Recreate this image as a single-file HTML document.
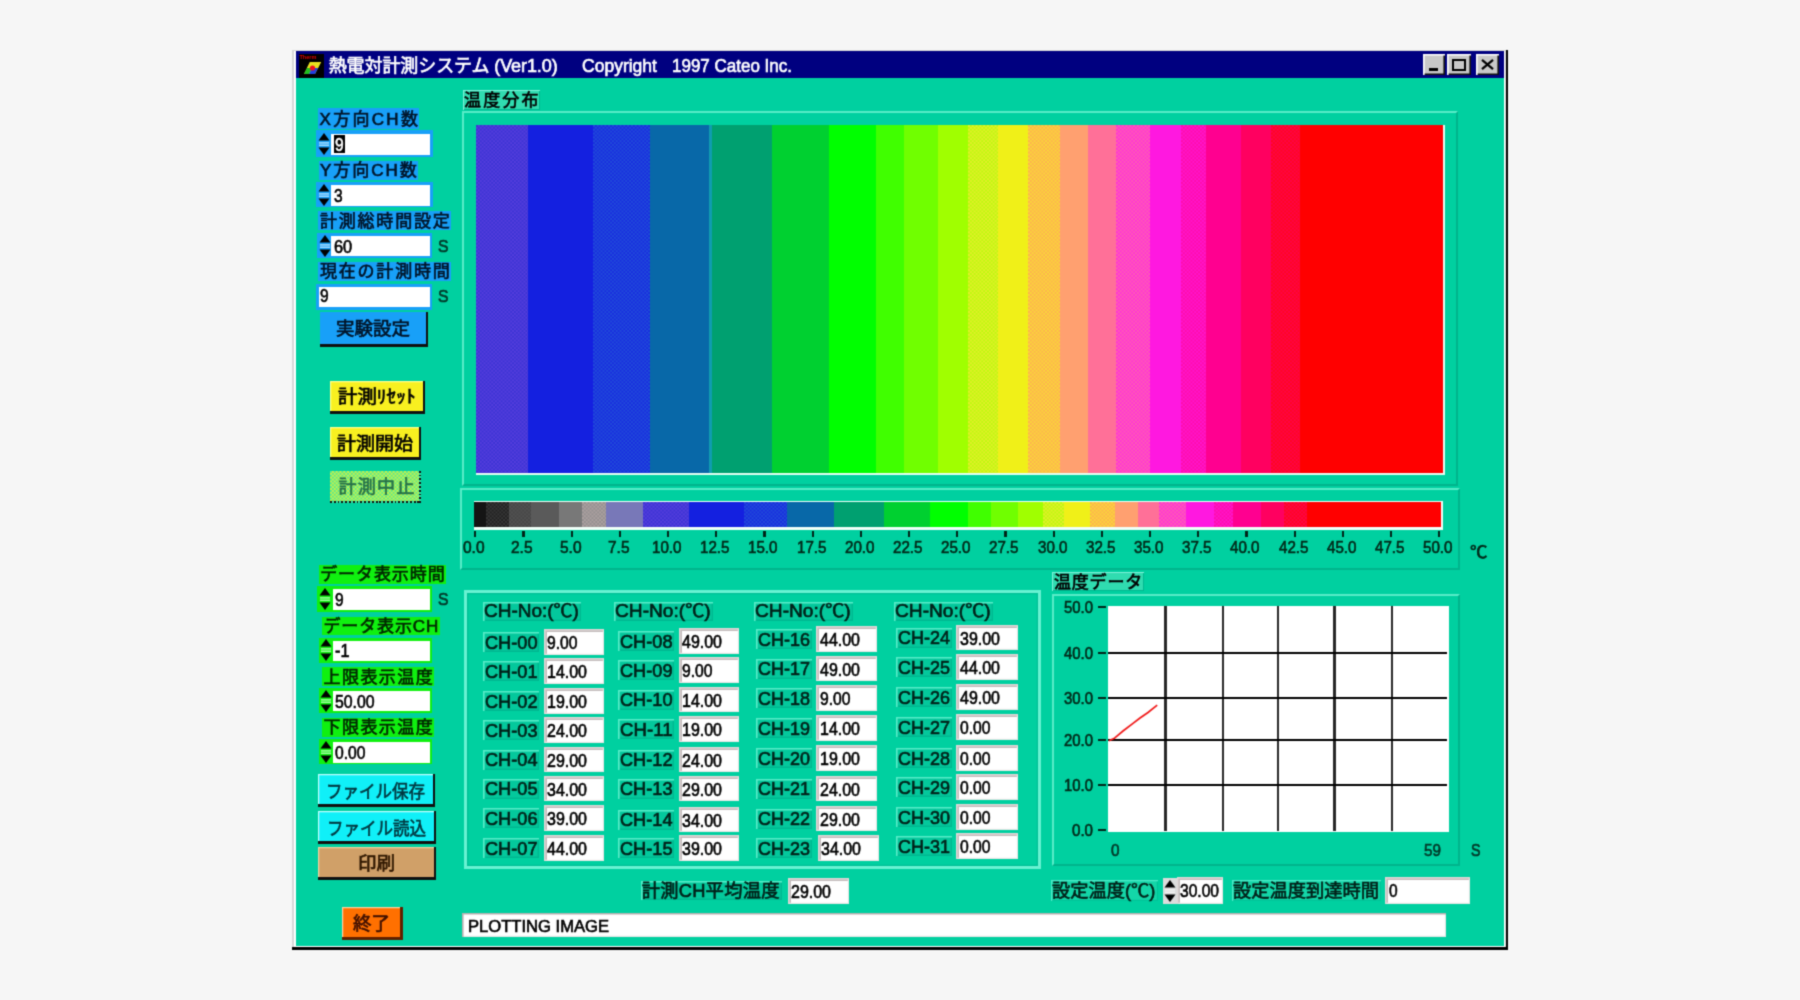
<!DOCTYPE html>
<html lang="ja"><head><meta charset="utf-8"><title>熱電対計測システム</title>
<style>
html,body{margin:0;padding:0;background:#f6f6f6;}
body{width:1800px;height:1000px;overflow:hidden;position:relative;font-family:"Liberation Sans","Noto Sans CJK JP",sans-serif;}
#w{position:absolute;left:0;top:0;width:1800px;height:1000px;background:#f6f6f6;filter:url(#bl);}
.t{position:absolute;white-space:nowrap;line-height:1.2;transform-origin:0 50%;display:inline-block;-webkit-text-stroke:0.65px currentColor;}
svg{position:absolute;overflow:visible}
</style></head>
<body><svg width="0" height="0" style="position:absolute"><defs><filter id="bl" x="0" y="0" width="100%" height="100%" color-interpolation-filters="sRGB"><feConvolveMatrix order="3" kernelMatrix="1 4 1 4 16 4 1 4 1" divisor="36" edgeMode="duplicate" preserveAlpha="true"/></filter></defs></svg><div id="w">
<div style="position:absolute;left:292.0px;top:946.7px;width:1216.0px;height:2.9px;background:#000;"></div>
<div style="position:absolute;left:1505.6px;top:50.0px;width:2.4px;height:899.6px;background:#000;"></div>
<div style="position:absolute;left:292.3px;top:50.3px;width:1213.7px;height:896.9px;background:#d8d8d8;"></div>
<div style="position:absolute;left:293.7px;top:50.8px;width:1210.9px;height:895.8px;background:#ffffff;"></div>
<div style="position:absolute;left:296.3px;top:51.3px;width:1207.6px;height:26.9px;background:#000080;"></div>
<div style="position:absolute;left:296.3px;top:78.2px;width:1207.6px;height:868.2px;background:#00d0a0;"></div>
<div style="position:absolute;left:299.0px;top:54.0px;width:25.0px;height:23.5px;background:#000;"></div>
<svg style="left:299px;top:54px" width="25" height="24" viewBox="0 0 25 24"><polygon points="5,20 11,8 22,8 16,20" fill="#e8e020"/><polygon points="5,20 8,14 13,14 10,20" fill="#20c020"/><polygon points="10,20 13,14 19,14 16,20" fill="#2040e0"/><polygon points="11,8 22,8 19,14 8,14" fill="#e8e020"/><circle cx="13.5" cy="14" r="2.6" fill="#f01020"/><text x="0.5" y="4.6" font-size="5.5" fill="#e00000" font-family="Liberation Sans,sans-serif" font-weight="700">Therm</text></svg>
<span class="t" style="letter-spacing:-0.09px;left:328.7px;top:55.7px;font-size:18.0px;color:#fff;font-weight:400;">熱電対計測システム (Ver1.0)</span>
<span class="t" style="transform:scaleX(0.973);left:581.7px;top:55.7px;font-size:18.0px;color:#fff;font-weight:400;">Copyright</span>
<span class="t" style="transform:scaleX(0.944);left:671.7px;top:55.7px;font-size:18.0px;color:#fff;font-weight:400;">1997 Cateo Inc.</span>
<div style="position:absolute;left:1423.1px;top:54.4px;width:21.8px;height:20.3px;background:#c8c8c8;box-shadow:inset 1.6px 1.6px 0 #fff,inset -1.6px -1.6px 0 #101010;"></div>
<div style="position:absolute;left:1446.9px;top:54.4px;width:23.8px;height:20.3px;background:#c8c8c8;box-shadow:inset 1.6px 1.6px 0 #fff,inset -1.6px -1.6px 0 #101010;"></div>
<div style="position:absolute;left:1476.0px;top:54.4px;width:22.7px;height:20.3px;background:#c8c8c8;box-shadow:inset 1.6px 1.6px 0 #fff,inset -1.6px -1.6px 0 #101010;"></div>
<div style="position:absolute;left:1429.4px;top:68.4px;width:8.8px;height:2.8px;background:#000;"></div>
<div style="position:absolute;left:1451.8px;top:58.6px;width:14.0px;height:12.6px;background:transparent;box-sizing:border-box;border:2px solid #000;"></div>
<svg style="left:1481px;top:59px" width="13" height="11" viewBox="0 0 13 11"><path d="M1 0.8 L12 10.2 M12 0.8 L1 10.2" stroke="#000" stroke-width="2.2" fill="none"/></svg>
<div style="position:absolute;left:318.0px;top:108.4px;width:101.4px;height:20.4px;background:#18a0f8;"></div>
<span class="t" style="letter-spacing:2.30px;left:319.5px;top:109.7px;font-size:17.0px;color:#001428;font-weight:400;">X方向CH数</span>
<div style="position:absolute;left:316.2px;top:130.0px;width:116.4px;height:27.0px;background:#18a0f8;"></div>
<div style="position:absolute;left:331.4px;top:133.6px;width:98.2px;height:21.6px;background:#fff;"></div>
<svg style="left:318.3px;top:131.5px" width="12" height="24" viewBox="0 0 12 24"><polygon points="6,1 11.5,8.5 0.5,8.5" fill="#000"/><polygon points="6,23 11.5,15.5 0.5,15.5" fill="#000"/><rect x="1" y="10.3" width="10" height="1.2" fill="#fff" opacity="0.75"/><rect x="1" y="12.6" width="10" height="1.2" fill="#fff" opacity="0.75"/></svg>
<div style="position:absolute;left:333.6px;top:135.4px;width:11.4px;height:17.4px;background:#000;"></div>
<span class="t" style="transform:scaleX(0.859);left:334.6px;top:135.1px;font-size:18.0px;color:#fff;font-weight:400;">9</span>
<div style="position:absolute;left:318.6px;top:160.6px;width:99.6px;height:19.2px;background:#18a0f8;"></div>
<span class="t" style="letter-spacing:1.94px;left:320.1px;top:161.3px;font-size:17.0px;color:#001428;font-weight:400;">Y方向CH数</span>
<div style="position:absolute;left:316.2px;top:181.6px;width:116.4px;height:25.8px;background:#18a0f8;"></div>
<div style="position:absolute;left:331.4px;top:184.6px;width:98.2px;height:21.0px;background:#fff;"></div>
<svg style="left:318.3px;top:182.5px" width="12" height="24" viewBox="0 0 12 24"><polygon points="6,1 11.5,8.5 0.5,8.5" fill="#000"/><polygon points="6,23 11.5,15.5 0.5,15.5" fill="#000"/><rect x="1" y="10.3" width="10" height="1.2" fill="#fff" opacity="0.75"/><rect x="1" y="12.6" width="10" height="1.2" fill="#fff" opacity="0.75"/></svg>
<span class="t" style="transform:scaleX(0.859);left:333.8px;top:185.8px;font-size:18.0px;color:#000;font-weight:400;">3</span>
<div style="position:absolute;left:318.4px;top:211.2px;width:132.9px;height:18.6px;background:#18a0f8;"></div>
<span class="t" style="letter-spacing:1.82px;left:319.9px;top:211.6px;font-size:17.0px;color:#001428;font-weight:400;">計測総時間設定</span>
<div style="position:absolute;left:316.8px;top:232.8px;width:115.2px;height:25.6px;background:#18a0f8;"></div>
<div style="position:absolute;left:331.2px;top:236.0px;width:98.5px;height:20.0px;background:#fff;"></div>
<svg style="left:318.5px;top:233.6px" width="12" height="24" viewBox="0 0 12 24"><polygon points="6,1 11.5,8.5 0.5,8.5" fill="#000"/><polygon points="6,23 11.5,15.5 0.5,15.5" fill="#000"/><rect x="1" y="10.3" width="10" height="1.2" fill="#fff" opacity="0.75"/><rect x="1" y="12.6" width="10" height="1.2" fill="#fff" opacity="0.75"/></svg>
<span class="t" style="transform:scaleX(0.909);left:333.6px;top:236.7px;font-size:18.0px;color:#000;font-weight:400;">60</span>
<span class="t" style="transform:scaleX(0.926);left:437.7px;top:237.1px;font-size:17.0px;color:#003828;font-weight:400;">S</span>
<div style="position:absolute;left:318.4px;top:261.6px;width:132.9px;height:19.2px;background:#18a0f8;"></div>
<span class="t" style="letter-spacing:1.82px;left:319.9px;top:262.3px;font-size:17.0px;color:#001428;font-weight:400;">現在の計測時間</span>
<div style="position:absolute;left:316.0px;top:284.0px;width:116.0px;height:25.6px;background:#18a0f8;"></div>
<div style="position:absolute;left:318.9px;top:287.2px;width:110.8px;height:20.0px;background:#fff;"></div>
<span class="t" style="transform:scaleX(0.859);left:319.5px;top:286.3px;font-size:18.0px;color:#000;font-weight:400;">9</span>
<span class="t" style="transform:scaleX(0.926);left:437.7px;top:287.4px;font-size:17.0px;color:#003828;font-weight:400;">S</span>
<div style="position:absolute;left:320.0px;top:312.0px;width:108.0px;height:34.5px;background:#101010;"></div>
<div style="position:absolute;left:320.0px;top:312.0px;width:105.8px;height:31.9px;background:#18a0f8;"></div>
<span class="t" style="transform:scaleX(1.028);left:335.9px;top:319.4px;font-size:18.0px;color:#001428;font-weight:400;">実験設定</span>
<div style="position:absolute;left:330.4px;top:380.5px;width:94.5px;height:33.1px;background:#101010;"></div>
<div style="position:absolute;left:330.4px;top:380.5px;width:92.3px;height:30.5px;background:#f8f020;box-shadow:inset 1.2px 1.2px 0 #ffff90;"></div>
<span class="t" style="transform:scaleX(1.078);left:337.7px;top:387.2px;font-size:18.0px;color:#000;font-weight:400;">計測ﾘｾｯﾄ</span>
<div style="position:absolute;left:330.4px;top:427.2px;width:90.5px;height:32.8px;background:#101010;"></div>
<div style="position:absolute;left:330.4px;top:427.2px;width:88.3px;height:30.2px;background:#f8f020;box-shadow:inset 1.2px 1.2px 0 #ffff90;"></div>
<span class="t" style="transform:scaleX(1.056);left:336.5px;top:433.8px;font-size:18.0px;color:#000;font-weight:400;">計測開始</span>
<div style="position:absolute;left:330.4px;top:470.5px;width:90.5px;height:32.8px;background:#88f068;background-image:repeating-conic-gradient(#c8f048 0 25%,#58e890 0 50%);background-size:3.8px 3.8px;"></div>
<div style="position:absolute;left:330.4px;top:500.9px;width:90.5px;height:2.4px;background:#207858;background-image:repeating-linear-gradient(90deg,#101010 0 1.9px,#30e0a0 1.9px 3.8px);"></div>
<div style="position:absolute;left:418.8px;top:470.5px;width:2.1px;height:32.8px;background:#207858;background-image:repeating-linear-gradient(0deg,#101010 0 1.9px,#30e0a0 1.9px 3.8px);"></div>
<span class="t" style="letter-spacing:1.33px;left:338.4px;top:476.5px;font-size:18.0px;color:#1c6444;font-weight:400;opacity:0.9;">計測中止</span>
<div style="position:absolute;left:318.7px;top:564.9px;width:127.5px;height:18.9px;background:#10f010;"></div>
<span class="t" style="letter-spacing:0.92px;left:320.2px;top:565.4px;font-size:17.0px;color:#002800;font-weight:400;">データ表示時間</span>
<div style="position:absolute;left:316.5px;top:585.8px;width:115.5px;height:26.4px;background:#10f010;"></div>
<div style="position:absolute;left:333.0px;top:589.0px;width:96.8px;height:21.0px;background:#fff;"></div>
<svg style="left:319.2px;top:587.0px" width="12" height="24" viewBox="0 0 12 24"><polygon points="6,1 11.5,8.5 0.5,8.5" fill="#000"/><polygon points="6,23 11.5,15.5 0.5,15.5" fill="#000"/><rect x="1" y="10.3" width="10" height="1.2" fill="#fff" opacity="0.75"/><rect x="1" y="12.6" width="10" height="1.2" fill="#fff" opacity="0.75"/></svg>
<span class="t" style="transform:scaleX(0.859);left:335.4px;top:590.2px;font-size:18.0px;color:#000;font-weight:400;">9</span>
<span class="t" style="transform:scaleX(0.926);left:437.7px;top:590.3px;font-size:17.0px;color:#003828;font-weight:400;">S</span>
<div style="position:absolute;left:322.0px;top:616.6px;width:117.7px;height:18.9px;background:#10f010;"></div>
<span class="t" style="letter-spacing:0.86px;left:323.5px;top:617.1px;font-size:17.0px;color:#002800;font-weight:400;">データ表示CH</span>
<div style="position:absolute;left:318.7px;top:637.5px;width:113.3px;height:25.3px;background:#10f010;"></div>
<div style="position:absolute;left:333.0px;top:640.8px;width:96.8px;height:19.8px;background:#fff;"></div>
<svg style="left:320.4px;top:638.1px" width="12" height="24" viewBox="0 0 12 24"><polygon points="6,1 11.5,8.5 0.5,8.5" fill="#000"/><polygon points="6,23 11.5,15.5 0.5,15.5" fill="#000"/><rect x="1" y="10.3" width="10" height="1.2" fill="#fff" opacity="0.75"/><rect x="1" y="12.6" width="10" height="1.2" fill="#fff" opacity="0.75"/></svg>
<span class="t" style="transform:scaleX(0.905);left:335.4px;top:641.4px;font-size:18.0px;color:#000;font-weight:400;">-1</span>
<div style="position:absolute;left:322.0px;top:667.2px;width:112.2px;height:18.4px;background:#10f010;"></div>
<span class="t" style="letter-spacing:1.44px;left:323.5px;top:667.5px;font-size:17.0px;color:#002800;font-weight:400;">上限表示温度</span>
<div style="position:absolute;left:318.7px;top:688.0px;width:113.3px;height:25.4px;background:#10f010;"></div>
<div style="position:absolute;left:333.0px;top:691.4px;width:96.8px;height:19.8px;background:#fff;"></div>
<svg style="left:320.4px;top:688.7px" width="12" height="24" viewBox="0 0 12 24"><polygon points="6,1 11.5,8.5 0.5,8.5" fill="#000"/><polygon points="6,23 11.5,15.5 0.5,15.5" fill="#000"/><rect x="1" y="10.3" width="10" height="1.2" fill="#fff" opacity="0.75"/><rect x="1" y="12.6" width="10" height="1.2" fill="#fff" opacity="0.75"/></svg>
<span class="t" style="transform:scaleX(0.879);left:335.4px;top:692.0px;font-size:18.0px;color:#000;font-weight:400;">50.00</span>
<div style="position:absolute;left:322.0px;top:717.8px;width:112.2px;height:19.0px;background:#10f010;"></div>
<span class="t" style="letter-spacing:1.44px;left:323.5px;top:718.4px;font-size:17.0px;color:#002800;font-weight:400;">下限表示温度</span>
<div style="position:absolute;left:318.7px;top:739.3px;width:113.3px;height:24.7px;background:#10f010;"></div>
<div style="position:absolute;left:333.0px;top:742.0px;width:96.8px;height:20.8px;background:#fff;"></div>
<svg style="left:320.4px;top:739.6px" width="12" height="24" viewBox="0 0 12 24"><polygon points="6,1 11.5,8.5 0.5,8.5" fill="#000"/><polygon points="6,23 11.5,15.5 0.5,15.5" fill="#000"/><rect x="1" y="10.3" width="10" height="1.2" fill="#fff" opacity="0.75"/><rect x="1" y="12.6" width="10" height="1.2" fill="#fff" opacity="0.75"/></svg>
<span class="t" style="transform:scaleX(0.870);left:335.4px;top:743.1px;font-size:18.0px;color:#000;font-weight:400;">0.00</span>
<div style="position:absolute;left:318.0px;top:773.5px;width:116.9px;height:33.3px;background:#101010;"></div>
<div style="position:absolute;left:318.0px;top:773.5px;width:114.7px;height:30.7px;background:#10f0f8;box-shadow:inset 1.2px 1.2px 0 #c0ffff;"></div>
<span class="t" style="transform:scaleX(0.917);left:325.8px;top:782.1px;font-size:18.0px;color:#003840;font-weight:400;">ファイル保存</span>
<div style="position:absolute;left:318.0px;top:810.6px;width:118.4px;height:33.2px;background:#101010;"></div>
<div style="position:absolute;left:318.0px;top:810.6px;width:116.2px;height:30.6px;background:#10f0f8;box-shadow:inset 1.2px 1.2px 0 #c0ffff;"></div>
<span class="t" style="transform:scaleX(0.917);left:326.6px;top:819.2px;font-size:18.0px;color:#003840;font-weight:400;">ファイル読込</span>
<div style="position:absolute;left:318.0px;top:847.0px;width:118.4px;height:33.0px;background:#101010;"></div>
<div style="position:absolute;left:318.0px;top:847.0px;width:116.2px;height:30.4px;background:#d0a068;box-shadow:inset 1.2px 1.2px 0 #f0d0a0;"></div>
<span class="t" style="transform:scaleX(1.028);left:357.6px;top:853.7px;font-size:18.0px;color:#301800;font-weight:400;">印刷</span>
<div style="position:absolute;left:342.2px;top:907.4px;width:60.4px;height:32.3px;background:#602000;"></div>
<div style="position:absolute;left:342.2px;top:907.4px;width:58.2px;height:29.7px;background:#ff7000;box-shadow:inset 1.2px 1.2px 0 #ffd0a0;"></div>
<span class="t" style="transform:scaleX(1.028);left:352.8px;top:913.8px;font-size:18.0px;color:#401000;font-weight:400;">終了</span>
<div style="position:absolute;left:462.5px;top:90.0px;width:77.5px;height:20.0px;background:#30dcb0;box-shadow:inset 1px 1px 0 #80f0d8,inset -1px -1px 0 #00b890;"></div>
<span class="t" style="letter-spacing:2.17px;left:464.0px;top:91.1px;font-size:17.0px;color:#000;font-weight:400;">温度分布</span>
<div style="position:absolute;left:462.0px;top:110.8px;width:995.6px;height:375.4px;background:transparent;box-sizing:border-box;border-style:solid;border-color:#58ecc8 #00b48c #00b48c #58ecc8;border-width:2.8px 2.6px 2.6px 2.8px;"></div>
<div style="position:absolute;left:475.6px;top:124.6px;width:969.5px;height:350.8px;background:#e4fff2;"></div>
<div style="position:absolute;left:475.8px;top:124.9px;width:52.0px;height:348.6px;background:#4a3ad8;background-image:repeating-conic-gradient(#543cdc 0 25%,#3c34d4 0 50%);background-size:3.8px 3.8px;"></div>
<div style="position:absolute;left:527.5px;top:124.9px;width:65.6px;height:348.6px;background:#1420e0;"></div>
<div style="position:absolute;left:592.8px;top:124.9px;width:57.2px;height:348.6px;background:#1c3adc;background-image:repeating-conic-gradient(#182ede 0 25%,#204ada 0 50%);background-size:3.8px 3.8px;"></div>
<div style="position:absolute;left:649.7px;top:124.9px;width:59.2px;height:348.6px;background:#0868a8;"></div>
<div style="position:absolute;left:708.6px;top:124.9px;width:3.7px;height:348.6px;background:#109cb0;"></div>
<div style="position:absolute;left:712.0px;top:124.9px;width:60.0px;height:348.6px;background:#00a070;"></div>
<div style="position:absolute;left:771.7px;top:124.9px;width:57.5px;height:348.6px;background:#00d030;"></div>
<div style="position:absolute;left:828.9px;top:124.9px;width:47.2px;height:348.6px;background:#00ff00;"></div>
<div style="position:absolute;left:875.8px;top:124.9px;width:28.9px;height:348.6px;background:#40ff00;"></div>
<div style="position:absolute;left:904.4px;top:124.9px;width:34.2px;height:348.6px;background:#70ff00;"></div>
<div style="position:absolute;left:938.3px;top:124.9px;width:30.3px;height:348.6px;background:#a0ff00;"></div>
<div style="position:absolute;left:968.3px;top:124.9px;width:29.5px;height:348.6px;background:#d4f420;background-image:repeating-conic-gradient(#bcf90e 0 25%,#e4ee2a 0 50%);background-size:3.8px 3.8px;"></div>
<div style="position:absolute;left:997.5px;top:124.9px;width:30.3px;height:348.6px;background:#f0f018;"></div>
<div style="position:absolute;left:1027.5px;top:124.9px;width:32.8px;height:348.6px;background:#ffc444;background-image:repeating-conic-gradient(#fad63a 0 25%,#fdb24e 0 50%);background-size:3.8px 3.8px;"></div>
<div style="position:absolute;left:1060.0px;top:124.9px;width:28.1px;height:348.6px;background:#ffa070;"></div>
<div style="position:absolute;left:1087.8px;top:124.9px;width:28.1px;height:348.6px;background:#ff7098;"></div>
<div style="position:absolute;left:1115.6px;top:124.9px;width:34.4px;height:348.6px;background:#ff48c8;background-image:repeating-conic-gradient(#ff5cb2 0 25%,#ff34d6 0 50%);background-size:3.8px 3.8px;"></div>
<div style="position:absolute;left:1149.7px;top:124.9px;width:31.4px;height:348.6px;background:#ff18e0;"></div>
<div style="position:absolute;left:1180.8px;top:124.9px;width:25.9px;height:348.6px;background:#ff10c8;background-image:repeating-conic-gradient(#ff14ce 0 25%,#ff0caa 0 50%);background-size:3.8px 3.8px;"></div>
<div style="position:absolute;left:1206.4px;top:124.9px;width:34.5px;height:348.6px;background:#ff0090;"></div>
<div style="position:absolute;left:1240.6px;top:124.9px;width:30.3px;height:348.6px;background:#ff0060;"></div>
<div style="position:absolute;left:1270.6px;top:124.9px;width:30.0px;height:348.6px;background:#ff0830;background-image:repeating-conic-gradient(#ff024a 0 25%,#ff061e 0 50%);background-size:3.8px 3.8px;"></div>
<div style="position:absolute;left:1300.3px;top:124.9px;width:143.2px;height:348.6px;background:#ff0000;"></div>
<div style="position:absolute;left:460.0px;top:487.8px;width:999.6px;height:82.4px;background:transparent;box-sizing:border-box;border-style:solid;border-color:#58ecc8 #00b48c #00b48c #58ecc8;border-width:2.8px 2.6px 2.6px 2.8px;"></div>
<div style="position:absolute;left:473.7px;top:501.2px;width:969.1px;height:28.8px;background:#f0fff8;"></div>
<div style="position:absolute;left:473.9px;top:501.9px;width:12.2px;height:25.3px;background:#141414;"></div>
<div style="position:absolute;left:485.8px;top:501.9px;width:23.9px;height:25.3px;background:#2c2c2c;background-image:repeating-conic-gradient(#222222 0 25%,#363636 0 50%);background-size:3.8px 3.8px;"></div>
<div style="position:absolute;left:509.4px;top:501.9px;width:21.7px;height:25.3px;background:#4a4a4a;background-image:repeating-conic-gradient(#464646 0 25%,#525252 0 50%);background-size:3.8px 3.8px;"></div>
<div style="position:absolute;left:530.8px;top:501.9px;width:28.1px;height:25.3px;background:#5a5a5a;"></div>
<div style="position:absolute;left:558.6px;top:501.9px;width:23.9px;height:25.3px;background:#787878;"></div>
<div style="position:absolute;left:582.2px;top:501.9px;width:23.9px;height:25.3px;background:#a09898;background-image:repeating-conic-gradient(#949090 0 25%,#aca0a0 0 50%);background-size:3.8px 3.8px;"></div>
<div style="position:absolute;left:605.8px;top:501.9px;width:37.8px;height:25.3px;background:#7878b8;"></div>
<div style="position:absolute;left:643.3px;top:501.9px;width:46.2px;height:25.3px;background:#4a3ad8;background-image:repeating-conic-gradient(#543cdc 0 25%,#3c34d4 0 50%);background-size:3.8px 3.8px;"></div>
<div style="position:absolute;left:689.2px;top:501.9px;width:55.0px;height:25.3px;background:#1420e0;"></div>
<div style="position:absolute;left:743.9px;top:501.9px;width:43.6px;height:25.3px;background:#1c3adc;background-image:repeating-conic-gradient(#182ede 0 25%,#204ada 0 50%);background-size:3.8px 3.8px;"></div>
<div style="position:absolute;left:787.2px;top:501.9px;width:46.7px;height:25.3px;background:#0868a8;"></div>
<div style="position:absolute;left:833.6px;top:501.9px;width:50.9px;height:25.3px;background:#00a070;"></div>
<div style="position:absolute;left:884.2px;top:501.9px;width:46.1px;height:25.3px;background:#00d030;"></div>
<div style="position:absolute;left:930.0px;top:501.9px;width:38.6px;height:25.3px;background:#00ff00;"></div>
<div style="position:absolute;left:968.3px;top:501.9px;width:22.8px;height:25.3px;background:#40ff00;"></div>
<div style="position:absolute;left:990.8px;top:501.9px;width:27.0px;height:25.3px;background:#70ff00;"></div>
<div style="position:absolute;left:1017.5px;top:501.9px;width:26.1px;height:25.3px;background:#a0ff00;"></div>
<div style="position:absolute;left:1043.3px;top:501.9px;width:21.0px;height:25.3px;background:#d4f420;background-image:repeating-conic-gradient(#bcf90e 0 25%,#e4ee2a 0 50%);background-size:3.8px 3.8px;"></div>
<div style="position:absolute;left:1064.0px;top:501.9px;width:26.3px;height:25.3px;background:#f0f018;"></div>
<div style="position:absolute;left:1090.0px;top:501.9px;width:25.3px;height:25.3px;background:#ffc444;background-image:repeating-conic-gradient(#fad63a 0 25%,#fdb24e 0 50%);background-size:3.8px 3.8px;"></div>
<div style="position:absolute;left:1115.0px;top:501.9px;width:22.8px;height:25.3px;background:#ffa070;"></div>
<div style="position:absolute;left:1137.5px;top:501.9px;width:21.8px;height:25.3px;background:#ff7098;"></div>
<div style="position:absolute;left:1159.0px;top:501.9px;width:26.9px;height:25.3px;background:#ff48c8;background-image:repeating-conic-gradient(#ff5cb2 0 25%,#ff34d6 0 50%);background-size:3.8px 3.8px;"></div>
<div style="position:absolute;left:1185.6px;top:501.9px;width:28.2px;height:25.3px;background:#ff18e0;"></div>
<div style="position:absolute;left:1213.5px;top:501.9px;width:19.8px;height:25.3px;background:#ff10c8;background-image:repeating-conic-gradient(#ff14ce 0 25%,#ff0caa 0 50%);background-size:3.8px 3.8px;"></div>
<div style="position:absolute;left:1233.0px;top:501.9px;width:28.3px;height:25.3px;background:#ff0090;"></div>
<div style="position:absolute;left:1261.0px;top:501.9px;width:23.3px;height:25.3px;background:#ff0060;"></div>
<div style="position:absolute;left:1284.0px;top:501.9px;width:23.3px;height:25.3px;background:#ff0830;background-image:repeating-conic-gradient(#ff024a 0 25%,#ff061e 0 50%);background-size:3.8px 3.8px;"></div>
<div style="position:absolute;left:1307.0px;top:501.9px;width:134.1px;height:25.3px;background:#ff0000;"></div>
<div style="position:absolute;left:474.2px;top:531.2px;width:2.2px;height:5.8px;background:#002418;"></div>
<span class="t" style="transform:scaleX(0.909);left:463.1px;top:538.0px;font-size:17.0px;color:#002818;font-weight:400;">0.0</span>
<div style="position:absolute;left:522.4px;top:531.2px;width:2.2px;height:5.8px;background:#002418;"></div>
<span class="t" style="transform:scaleX(0.909);left:511.2px;top:538.0px;font-size:17.0px;color:#002818;font-weight:400;">2.5</span>
<div style="position:absolute;left:570.6px;top:531.2px;width:2.2px;height:5.8px;background:#002418;"></div>
<span class="t" style="transform:scaleX(0.909);left:559.5px;top:538.0px;font-size:17.0px;color:#002818;font-weight:400;">5.0</span>
<div style="position:absolute;left:618.8px;top:531.2px;width:2.2px;height:5.8px;background:#002418;"></div>
<span class="t" style="transform:scaleX(0.909);left:607.7px;top:538.0px;font-size:17.0px;color:#002818;font-weight:400;">7.5</span>
<div style="position:absolute;left:667.0px;top:531.2px;width:2.2px;height:5.8px;background:#002418;"></div>
<span class="t" style="transform:scaleX(0.891);left:651.9px;top:538.0px;font-size:17.0px;color:#002818;font-weight:400;">10.0</span>
<div style="position:absolute;left:715.2px;top:531.2px;width:2.2px;height:5.8px;background:#002418;"></div>
<span class="t" style="transform:scaleX(0.891);left:700.0px;top:538.0px;font-size:17.0px;color:#002818;font-weight:400;">12.5</span>
<div style="position:absolute;left:763.4px;top:531.2px;width:2.2px;height:5.8px;background:#002418;"></div>
<span class="t" style="transform:scaleX(0.891);left:748.2px;top:538.0px;font-size:17.0px;color:#002818;font-weight:400;">15.0</span>
<div style="position:absolute;left:811.6px;top:531.2px;width:2.2px;height:5.8px;background:#002418;"></div>
<span class="t" style="transform:scaleX(0.891);left:796.5px;top:538.0px;font-size:17.0px;color:#002818;font-weight:400;">17.5</span>
<div style="position:absolute;left:859.8px;top:531.2px;width:2.2px;height:5.8px;background:#002418;"></div>
<span class="t" style="transform:scaleX(0.891);left:844.7px;top:538.0px;font-size:17.0px;color:#002818;font-weight:400;">20.0</span>
<div style="position:absolute;left:908.0px;top:531.2px;width:2.2px;height:5.8px;background:#002418;"></div>
<span class="t" style="transform:scaleX(0.891);left:892.9px;top:538.0px;font-size:17.0px;color:#002818;font-weight:400;">22.5</span>
<div style="position:absolute;left:956.2px;top:531.2px;width:2.2px;height:5.8px;background:#002418;"></div>
<span class="t" style="transform:scaleX(0.891);left:941.0px;top:538.0px;font-size:17.0px;color:#002818;font-weight:400;">25.0</span>
<div style="position:absolute;left:1004.4px;top:531.2px;width:2.2px;height:5.8px;background:#002418;"></div>
<span class="t" style="transform:scaleX(0.891);left:989.2px;top:538.0px;font-size:17.0px;color:#002818;font-weight:400;">27.5</span>
<div style="position:absolute;left:1052.6px;top:531.2px;width:2.2px;height:5.8px;background:#002418;"></div>
<span class="t" style="transform:scaleX(0.891);left:1037.5px;top:538.0px;font-size:17.0px;color:#002818;font-weight:400;">30.0</span>
<div style="position:absolute;left:1100.8px;top:531.2px;width:2.2px;height:5.8px;background:#002418;"></div>
<span class="t" style="transform:scaleX(0.891);left:1085.7px;top:538.0px;font-size:17.0px;color:#002818;font-weight:400;">32.5</span>
<div style="position:absolute;left:1149.0px;top:531.2px;width:2.2px;height:5.8px;background:#002418;"></div>
<span class="t" style="transform:scaleX(0.891);left:1133.9px;top:538.0px;font-size:17.0px;color:#002818;font-weight:400;">35.0</span>
<div style="position:absolute;left:1197.2px;top:531.2px;width:2.2px;height:5.8px;background:#002418;"></div>
<span class="t" style="transform:scaleX(0.891);left:1182.0px;top:538.0px;font-size:17.0px;color:#002818;font-weight:400;">37.5</span>
<div style="position:absolute;left:1245.4px;top:531.2px;width:2.2px;height:5.8px;background:#002418;"></div>
<span class="t" style="transform:scaleX(0.891);left:1230.2px;top:538.0px;font-size:17.0px;color:#002818;font-weight:400;">40.0</span>
<div style="position:absolute;left:1293.6px;top:531.2px;width:2.2px;height:5.8px;background:#002418;"></div>
<span class="t" style="transform:scaleX(0.891);left:1278.5px;top:538.0px;font-size:17.0px;color:#002818;font-weight:400;">42.5</span>
<div style="position:absolute;left:1341.8px;top:531.2px;width:2.2px;height:5.8px;background:#002418;"></div>
<span class="t" style="transform:scaleX(0.891);left:1326.7px;top:538.0px;font-size:17.0px;color:#002818;font-weight:400;">45.0</span>
<div style="position:absolute;left:1390.0px;top:531.2px;width:2.2px;height:5.8px;background:#002418;"></div>
<span class="t" style="transform:scaleX(0.891);left:1374.9px;top:538.0px;font-size:17.0px;color:#002818;font-weight:400;">47.5</span>
<div style="position:absolute;left:1438.2px;top:531.2px;width:2.2px;height:5.8px;background:#002418;"></div>
<span class="t" style="transform:scaleX(0.891);left:1423.0px;top:538.0px;font-size:17.0px;color:#002818;font-weight:400;">50.0</span>
<span class="t" style="transform:scaleX(1.029);left:1469.5px;top:542.8px;font-size:17.0px;color:#002818;font-weight:400;">℃</span>
<div style="position:absolute;left:464.0px;top:589.8px;width:576.6px;height:279.6px;background:transparent;box-sizing:border-box;border:3px solid #68f2d2;box-shadow:inset 0 0 0 1.2px #00c096;"></div>
<div style="position:absolute;left:482.5px;top:601.7px;width:98.3px;height:19.8px;background:#04c89c;box-shadow:inset 1.6px 1.6px 0 #58ecc8,inset -1.4px -1.4px 0 #00b890;"></div>
<span class="t" style="transform:scaleX(1.038);left:483.7px;top:600.3px;font-size:18.3px;color:#002018;font-weight:400;">CH-No:(℃)</span>
<div style="position:absolute;left:483.3px;top:632.0px;width:55.9px;height:20.0px;background:#04c89c;box-shadow:inset 1.6px 1.6px 0 #58ecc8,inset -1.4px -1.4px 0 #00b890;"></div>
<span class="t" style="transform:scaleX(0.994);left:484.5px;top:631.7px;font-size:18.3px;color:#002018;font-weight:400;">CH-00</span>
<div style="position:absolute;left:544.2px;top:629.2px;width:60.0px;height:25.6px;background:#fff;box-shadow:inset 1.4px 1.4px 0 #e0d8d8,inset -1.2px -1.2px 0 #ece8e8,inset 3px 3px 0 #c4bcbc;"></div>
<span class="t" style="transform:scaleX(0.857);left:547.4px;top:632.2px;font-size:18.3px;color:#000;font-weight:400;">9.00</span>
<div style="position:absolute;left:483.3px;top:661.1px;width:55.9px;height:20.0px;background:#04c89c;box-shadow:inset 1.6px 1.6px 0 #58ecc8,inset -1.4px -1.4px 0 #00b890;"></div>
<span class="t" style="transform:scaleX(0.994);left:484.5px;top:660.8px;font-size:18.3px;color:#002018;font-weight:400;">CH-01</span>
<div style="position:absolute;left:544.2px;top:658.3px;width:60.0px;height:25.6px;background:#fff;box-shadow:inset 1.4px 1.4px 0 #e0d8d8,inset -1.2px -1.2px 0 #ece8e8,inset 3px 3px 0 #c4bcbc;"></div>
<span class="t" style="transform:scaleX(0.874);left:547.4px;top:661.3px;font-size:18.3px;color:#000;font-weight:400;">14.00</span>
<div style="position:absolute;left:483.3px;top:690.8px;width:55.9px;height:20.0px;background:#04c89c;box-shadow:inset 1.6px 1.6px 0 #58ecc8,inset -1.4px -1.4px 0 #00b890;"></div>
<span class="t" style="transform:scaleX(0.994);left:484.5px;top:690.5px;font-size:18.3px;color:#002018;font-weight:400;">CH-02</span>
<div style="position:absolute;left:544.2px;top:688.0px;width:60.0px;height:25.6px;background:#fff;box-shadow:inset 1.4px 1.4px 0 #e0d8d8,inset -1.2px -1.2px 0 #ece8e8,inset 3px 3px 0 #c4bcbc;"></div>
<span class="t" style="transform:scaleX(0.874);left:547.4px;top:691.0px;font-size:18.3px;color:#000;font-weight:400;">19.00</span>
<div style="position:absolute;left:483.3px;top:720.1px;width:55.9px;height:20.0px;background:#04c89c;box-shadow:inset 1.6px 1.6px 0 #58ecc8,inset -1.4px -1.4px 0 #00b890;"></div>
<span class="t" style="transform:scaleX(0.994);left:484.5px;top:719.8px;font-size:18.3px;color:#002018;font-weight:400;">CH-03</span>
<div style="position:absolute;left:544.2px;top:717.3px;width:60.0px;height:25.6px;background:#fff;box-shadow:inset 1.4px 1.4px 0 #e0d8d8,inset -1.2px -1.2px 0 #ece8e8,inset 3px 3px 0 #c4bcbc;"></div>
<span class="t" style="transform:scaleX(0.874);left:547.4px;top:720.3px;font-size:18.3px;color:#000;font-weight:400;">24.00</span>
<div style="position:absolute;left:483.3px;top:749.5px;width:55.9px;height:20.0px;background:#04c89c;box-shadow:inset 1.6px 1.6px 0 #58ecc8,inset -1.4px -1.4px 0 #00b890;"></div>
<span class="t" style="transform:scaleX(0.994);left:484.5px;top:749.2px;font-size:18.3px;color:#002018;font-weight:400;">CH-04</span>
<div style="position:absolute;left:544.2px;top:746.7px;width:60.0px;height:25.6px;background:#fff;box-shadow:inset 1.4px 1.4px 0 #e0d8d8,inset -1.2px -1.2px 0 #ece8e8,inset 3px 3px 0 #c4bcbc;"></div>
<span class="t" style="transform:scaleX(0.874);left:547.4px;top:749.7px;font-size:18.3px;color:#000;font-weight:400;">29.00</span>
<div style="position:absolute;left:483.3px;top:778.6px;width:55.9px;height:20.0px;background:#04c89c;box-shadow:inset 1.6px 1.6px 0 #58ecc8,inset -1.4px -1.4px 0 #00b890;"></div>
<span class="t" style="transform:scaleX(0.994);left:484.5px;top:778.3px;font-size:18.3px;color:#002018;font-weight:400;">CH-05</span>
<div style="position:absolute;left:544.2px;top:775.8px;width:60.0px;height:25.6px;background:#fff;box-shadow:inset 1.4px 1.4px 0 #e0d8d8,inset -1.2px -1.2px 0 #ece8e8,inset 3px 3px 0 #c4bcbc;"></div>
<span class="t" style="transform:scaleX(0.874);left:547.4px;top:778.8px;font-size:18.3px;color:#000;font-weight:400;">34.00</span>
<div style="position:absolute;left:483.3px;top:807.8px;width:55.9px;height:20.0px;background:#04c89c;box-shadow:inset 1.6px 1.6px 0 #58ecc8,inset -1.4px -1.4px 0 #00b890;"></div>
<span class="t" style="transform:scaleX(0.994);left:484.5px;top:807.5px;font-size:18.3px;color:#002018;font-weight:400;">CH-06</span>
<div style="position:absolute;left:544.2px;top:805.0px;width:60.0px;height:25.6px;background:#fff;box-shadow:inset 1.4px 1.4px 0 #e0d8d8,inset -1.2px -1.2px 0 #ece8e8,inset 3px 3px 0 #c4bcbc;"></div>
<span class="t" style="transform:scaleX(0.874);left:547.4px;top:808.0px;font-size:18.3px;color:#000;font-weight:400;">39.00</span>
<div style="position:absolute;left:483.3px;top:837.8px;width:55.9px;height:20.0px;background:#04c89c;box-shadow:inset 1.6px 1.6px 0 #58ecc8,inset -1.4px -1.4px 0 #00b890;"></div>
<span class="t" style="transform:scaleX(0.994);left:484.5px;top:837.5px;font-size:18.3px;color:#002018;font-weight:400;">CH-07</span>
<div style="position:absolute;left:544.2px;top:835.0px;width:60.0px;height:25.6px;background:#fff;box-shadow:inset 1.4px 1.4px 0 #e0d8d8,inset -1.2px -1.2px 0 #ece8e8,inset 3px 3px 0 #c4bcbc;"></div>
<span class="t" style="transform:scaleX(0.874);left:547.4px;top:838.0px;font-size:18.3px;color:#000;font-weight:400;">44.00</span>
<div style="position:absolute;left:614.2px;top:601.7px;width:99.1px;height:19.8px;background:#04c89c;box-shadow:inset 1.6px 1.6px 0 #58ecc8,inset -1.4px -1.4px 0 #00b890;"></div>
<span class="t" style="transform:scaleX(1.047);left:615.4px;top:600.3px;font-size:18.3px;color:#002018;font-weight:400;">CH-No:(℃)</span>
<div style="position:absolute;left:618.3px;top:630.8px;width:55.9px;height:20.0px;background:#04c89c;box-shadow:inset 1.6px 1.6px 0 #58ecc8,inset -1.4px -1.4px 0 #00b890;"></div>
<span class="t" style="transform:scaleX(0.994);left:619.5px;top:630.5px;font-size:18.3px;color:#002018;font-weight:400;">CH-08</span>
<div style="position:absolute;left:679.2px;top:628.0px;width:60.0px;height:25.6px;background:#fff;box-shadow:inset 1.4px 1.4px 0 #e0d8d8,inset -1.2px -1.2px 0 #ece8e8,inset 3px 3px 0 #c4bcbc;"></div>
<span class="t" style="transform:scaleX(0.874);left:682.4px;top:631.0px;font-size:18.3px;color:#000;font-weight:400;">49.00</span>
<div style="position:absolute;left:618.3px;top:660.1px;width:55.9px;height:20.0px;background:#04c89c;box-shadow:inset 1.6px 1.6px 0 #58ecc8,inset -1.4px -1.4px 0 #00b890;"></div>
<span class="t" style="transform:scaleX(0.994);left:619.5px;top:659.8px;font-size:18.3px;color:#002018;font-weight:400;">CH-09</span>
<div style="position:absolute;left:679.2px;top:657.3px;width:60.0px;height:25.6px;background:#fff;box-shadow:inset 1.4px 1.4px 0 #e0d8d8,inset -1.2px -1.2px 0 #ece8e8,inset 3px 3px 0 #c4bcbc;"></div>
<span class="t" style="transform:scaleX(0.857);left:682.4px;top:660.3px;font-size:18.3px;color:#000;font-weight:400;">9.00</span>
<div style="position:absolute;left:618.3px;top:689.5px;width:55.9px;height:20.0px;background:#04c89c;box-shadow:inset 1.6px 1.6px 0 #58ecc8,inset -1.4px -1.4px 0 #00b890;"></div>
<span class="t" style="transform:scaleX(0.994);left:619.5px;top:689.2px;font-size:18.3px;color:#002018;font-weight:400;">CH-10</span>
<div style="position:absolute;left:679.2px;top:686.7px;width:60.0px;height:25.6px;background:#fff;box-shadow:inset 1.4px 1.4px 0 #e0d8d8,inset -1.2px -1.2px 0 #ece8e8,inset 3px 3px 0 #c4bcbc;"></div>
<span class="t" style="transform:scaleX(0.874);left:682.4px;top:689.7px;font-size:18.3px;color:#000;font-weight:400;">14.00</span>
<div style="position:absolute;left:618.3px;top:718.8px;width:55.9px;height:20.0px;background:#04c89c;box-shadow:inset 1.6px 1.6px 0 #58ecc8,inset -1.4px -1.4px 0 #00b890;"></div>
<span class="t" style="transform:scaleX(1.020);left:619.5px;top:718.5px;font-size:18.3px;color:#002018;font-weight:400;">CH-11</span>
<div style="position:absolute;left:679.2px;top:716.0px;width:60.0px;height:25.6px;background:#fff;box-shadow:inset 1.4px 1.4px 0 #e0d8d8,inset -1.2px -1.2px 0 #ece8e8,inset 3px 3px 0 #c4bcbc;"></div>
<span class="t" style="transform:scaleX(0.874);left:682.4px;top:719.0px;font-size:18.3px;color:#000;font-weight:400;">19.00</span>
<div style="position:absolute;left:618.3px;top:749.5px;width:55.9px;height:20.0px;background:#04c89c;box-shadow:inset 1.6px 1.6px 0 #58ecc8,inset -1.4px -1.4px 0 #00b890;"></div>
<span class="t" style="transform:scaleX(0.994);left:619.5px;top:749.2px;font-size:18.3px;color:#002018;font-weight:400;">CH-12</span>
<div style="position:absolute;left:679.2px;top:746.7px;width:60.0px;height:25.6px;background:#fff;box-shadow:inset 1.4px 1.4px 0 #e0d8d8,inset -1.2px -1.2px 0 #ece8e8,inset 3px 3px 0 #c4bcbc;"></div>
<span class="t" style="transform:scaleX(0.874);left:682.4px;top:749.7px;font-size:18.3px;color:#000;font-weight:400;">24.00</span>
<div style="position:absolute;left:618.3px;top:778.6px;width:55.9px;height:20.0px;background:#04c89c;box-shadow:inset 1.6px 1.6px 0 #58ecc8,inset -1.4px -1.4px 0 #00b890;"></div>
<span class="t" style="transform:scaleX(0.994);left:619.5px;top:778.3px;font-size:18.3px;color:#002018;font-weight:400;">CH-13</span>
<div style="position:absolute;left:679.2px;top:775.8px;width:60.0px;height:25.6px;background:#fff;box-shadow:inset 1.4px 1.4px 0 #e0d8d8,inset -1.2px -1.2px 0 #ece8e8,inset 3px 3px 0 #c4bcbc;"></div>
<span class="t" style="transform:scaleX(0.874);left:682.4px;top:778.8px;font-size:18.3px;color:#000;font-weight:400;">29.00</span>
<div style="position:absolute;left:618.3px;top:809.5px;width:55.9px;height:20.0px;background:#04c89c;box-shadow:inset 1.6px 1.6px 0 #58ecc8,inset -1.4px -1.4px 0 #00b890;"></div>
<span class="t" style="transform:scaleX(0.994);left:619.5px;top:809.2px;font-size:18.3px;color:#002018;font-weight:400;">CH-14</span>
<div style="position:absolute;left:679.2px;top:806.7px;width:60.0px;height:25.6px;background:#fff;box-shadow:inset 1.4px 1.4px 0 #e0d8d8,inset -1.2px -1.2px 0 #ece8e8,inset 3px 3px 0 #c4bcbc;"></div>
<span class="t" style="transform:scaleX(0.874);left:682.4px;top:809.7px;font-size:18.3px;color:#000;font-weight:400;">34.00</span>
<div style="position:absolute;left:618.3px;top:837.8px;width:55.9px;height:20.0px;background:#04c89c;box-shadow:inset 1.6px 1.6px 0 #58ecc8,inset -1.4px -1.4px 0 #00b890;"></div>
<span class="t" style="transform:scaleX(0.994);left:619.5px;top:837.5px;font-size:18.3px;color:#002018;font-weight:400;">CH-15</span>
<div style="position:absolute;left:679.2px;top:835.0px;width:60.0px;height:25.6px;background:#fff;box-shadow:inset 1.4px 1.4px 0 #e0d8d8,inset -1.2px -1.2px 0 #ece8e8,inset 3px 3px 0 #c4bcbc;"></div>
<span class="t" style="transform:scaleX(0.874);left:682.4px;top:838.0px;font-size:18.3px;color:#000;font-weight:400;">39.00</span>
<div style="position:absolute;left:754.2px;top:601.7px;width:99.1px;height:19.8px;background:#04c89c;box-shadow:inset 1.6px 1.6px 0 #58ecc8,inset -1.4px -1.4px 0 #00b890;"></div>
<span class="t" style="transform:scaleX(1.047);left:755.4px;top:600.3px;font-size:18.3px;color:#002018;font-weight:400;">CH-No:(℃)</span>
<div style="position:absolute;left:756.3px;top:629.1px;width:55.4px;height:20.0px;background:#04c89c;box-shadow:inset 1.6px 1.6px 0 #58ecc8,inset -1.4px -1.4px 0 #00b890;"></div>
<span class="t" style="transform:scaleX(0.984);left:757.5px;top:628.8px;font-size:18.3px;color:#002018;font-weight:400;">CH-16</span>
<div style="position:absolute;left:816.3px;top:626.3px;width:61.2px;height:25.6px;background:#fff;box-shadow:inset 1.4px 1.4px 0 #e0d8d8,inset -1.2px -1.2px 0 #ece8e8,inset 3px 3px 0 #c4bcbc;"></div>
<span class="t" style="transform:scaleX(0.874);left:819.5px;top:629.3px;font-size:18.3px;color:#000;font-weight:400;">44.00</span>
<div style="position:absolute;left:756.3px;top:658.6px;width:55.4px;height:20.0px;background:#04c89c;box-shadow:inset 1.6px 1.6px 0 #58ecc8,inset -1.4px -1.4px 0 #00b890;"></div>
<span class="t" style="transform:scaleX(0.984);left:757.5px;top:658.3px;font-size:18.3px;color:#002018;font-weight:400;">CH-17</span>
<div style="position:absolute;left:816.3px;top:655.8px;width:61.2px;height:25.6px;background:#fff;box-shadow:inset 1.4px 1.4px 0 #e0d8d8,inset -1.2px -1.2px 0 #ece8e8,inset 3px 3px 0 #c4bcbc;"></div>
<span class="t" style="transform:scaleX(0.874);left:819.5px;top:658.8px;font-size:18.3px;color:#000;font-weight:400;">49.00</span>
<div style="position:absolute;left:756.3px;top:687.8px;width:55.4px;height:20.0px;background:#04c89c;box-shadow:inset 1.6px 1.6px 0 #58ecc8,inset -1.4px -1.4px 0 #00b890;"></div>
<span class="t" style="transform:scaleX(0.984);left:757.5px;top:687.5px;font-size:18.3px;color:#002018;font-weight:400;">CH-18</span>
<div style="position:absolute;left:816.3px;top:685.0px;width:61.2px;height:25.6px;background:#fff;box-shadow:inset 1.4px 1.4px 0 #e0d8d8,inset -1.2px -1.2px 0 #ece8e8,inset 3px 3px 0 #c4bcbc;"></div>
<span class="t" style="transform:scaleX(0.857);left:819.5px;top:688.0px;font-size:18.3px;color:#000;font-weight:400;">9.00</span>
<div style="position:absolute;left:756.3px;top:717.8px;width:55.4px;height:20.0px;background:#04c89c;box-shadow:inset 1.6px 1.6px 0 #58ecc8,inset -1.4px -1.4px 0 #00b890;"></div>
<span class="t" style="transform:scaleX(0.984);left:757.5px;top:717.5px;font-size:18.3px;color:#002018;font-weight:400;">CH-19</span>
<div style="position:absolute;left:816.3px;top:715.0px;width:61.2px;height:25.6px;background:#fff;box-shadow:inset 1.4px 1.4px 0 #e0d8d8,inset -1.2px -1.2px 0 #ece8e8,inset 3px 3px 0 #c4bcbc;"></div>
<span class="t" style="transform:scaleX(0.874);left:819.5px;top:718.0px;font-size:18.3px;color:#000;font-weight:400;">14.00</span>
<div style="position:absolute;left:756.3px;top:747.8px;width:55.4px;height:20.0px;background:#04c89c;box-shadow:inset 1.6px 1.6px 0 #58ecc8,inset -1.4px -1.4px 0 #00b890;"></div>
<span class="t" style="transform:scaleX(0.984);left:757.5px;top:747.5px;font-size:18.3px;color:#002018;font-weight:400;">CH-20</span>
<div style="position:absolute;left:816.3px;top:745.0px;width:61.2px;height:25.6px;background:#fff;box-shadow:inset 1.4px 1.4px 0 #e0d8d8,inset -1.2px -1.2px 0 #ece8e8,inset 3px 3px 0 #c4bcbc;"></div>
<span class="t" style="transform:scaleX(0.874);left:819.5px;top:748.0px;font-size:18.3px;color:#000;font-weight:400;">19.00</span>
<div style="position:absolute;left:756.3px;top:778.6px;width:55.4px;height:20.0px;background:#04c89c;box-shadow:inset 1.6px 1.6px 0 #58ecc8,inset -1.4px -1.4px 0 #00b890;"></div>
<span class="t" style="transform:scaleX(0.984);left:757.5px;top:778.3px;font-size:18.3px;color:#002018;font-weight:400;">CH-21</span>
<div style="position:absolute;left:816.3px;top:775.8px;width:61.2px;height:25.6px;background:#fff;box-shadow:inset 1.4px 1.4px 0 #e0d8d8,inset -1.2px -1.2px 0 #ece8e8,inset 3px 3px 0 #c4bcbc;"></div>
<span class="t" style="transform:scaleX(0.874);left:819.5px;top:778.8px;font-size:18.3px;color:#000;font-weight:400;">24.00</span>
<div style="position:absolute;left:756.3px;top:808.6px;width:55.4px;height:20.0px;background:#04c89c;box-shadow:inset 1.6px 1.6px 0 #58ecc8,inset -1.4px -1.4px 0 #00b890;"></div>
<span class="t" style="transform:scaleX(0.984);left:757.5px;top:808.3px;font-size:18.3px;color:#002018;font-weight:400;">CH-22</span>
<div style="position:absolute;left:816.3px;top:805.8px;width:61.2px;height:25.6px;background:#fff;box-shadow:inset 1.4px 1.4px 0 #e0d8d8,inset -1.2px -1.2px 0 #ece8e8,inset 3px 3px 0 #c4bcbc;"></div>
<span class="t" style="transform:scaleX(0.874);left:819.5px;top:808.8px;font-size:18.3px;color:#000;font-weight:400;">29.00</span>
<div style="position:absolute;left:756.3px;top:837.8px;width:55.4px;height:20.0px;background:#04c89c;box-shadow:inset 1.6px 1.6px 0 #58ecc8,inset -1.4px -1.4px 0 #00b890;"></div>
<span class="t" style="transform:scaleX(0.984);left:757.5px;top:837.5px;font-size:18.3px;color:#002018;font-weight:400;">CH-23</span>
<div style="position:absolute;left:817.9px;top:835.0px;width:61.2px;height:25.6px;background:#fff;box-shadow:inset 1.4px 1.4px 0 #e0d8d8,inset -1.2px -1.2px 0 #ece8e8,inset 3px 3px 0 #c4bcbc;"></div>
<span class="t" style="transform:scaleX(0.874);left:821.1px;top:838.0px;font-size:18.3px;color:#000;font-weight:400;">34.00</span>
<div style="position:absolute;left:894.2px;top:601.7px;width:99.1px;height:19.8px;background:#04c89c;box-shadow:inset 1.6px 1.6px 0 #58ecc8,inset -1.4px -1.4px 0 #00b890;"></div>
<span class="t" style="transform:scaleX(1.047);left:895.4px;top:600.3px;font-size:18.3px;color:#002018;font-weight:400;">CH-No:(℃)</span>
<div style="position:absolute;left:896.3px;top:627.5px;width:55.4px;height:20.0px;background:#04c89c;box-shadow:inset 1.6px 1.6px 0 #58ecc8,inset -1.4px -1.4px 0 #00b890;"></div>
<span class="t" style="transform:scaleX(0.984);left:897.5px;top:627.2px;font-size:18.3px;color:#002018;font-weight:400;">CH-24</span>
<div style="position:absolute;left:956.3px;top:624.7px;width:62.0px;height:25.6px;background:#fff;box-shadow:inset 1.4px 1.4px 0 #e0d8d8,inset -1.2px -1.2px 0 #ece8e8,inset 3px 3px 0 #c4bcbc;"></div>
<span class="t" style="transform:scaleX(0.874);left:959.5px;top:627.7px;font-size:18.3px;color:#000;font-weight:400;">39.00</span>
<div style="position:absolute;left:896.3px;top:657.0px;width:55.4px;height:20.0px;background:#04c89c;box-shadow:inset 1.6px 1.6px 0 #58ecc8,inset -1.4px -1.4px 0 #00b890;"></div>
<span class="t" style="transform:scaleX(0.984);left:897.5px;top:656.7px;font-size:18.3px;color:#002018;font-weight:400;">CH-25</span>
<div style="position:absolute;left:956.3px;top:654.2px;width:62.0px;height:25.6px;background:#fff;box-shadow:inset 1.4px 1.4px 0 #e0d8d8,inset -1.2px -1.2px 0 #ece8e8,inset 3px 3px 0 #c4bcbc;"></div>
<span class="t" style="transform:scaleX(0.874);left:959.5px;top:657.2px;font-size:18.3px;color:#000;font-weight:400;">44.00</span>
<div style="position:absolute;left:896.3px;top:687.0px;width:55.4px;height:20.0px;background:#04c89c;box-shadow:inset 1.6px 1.6px 0 #58ecc8,inset -1.4px -1.4px 0 #00b890;"></div>
<span class="t" style="transform:scaleX(0.984);left:897.5px;top:686.7px;font-size:18.3px;color:#002018;font-weight:400;">CH-26</span>
<div style="position:absolute;left:956.3px;top:684.2px;width:62.0px;height:25.6px;background:#fff;box-shadow:inset 1.4px 1.4px 0 #e0d8d8,inset -1.2px -1.2px 0 #ece8e8,inset 3px 3px 0 #c4bcbc;"></div>
<span class="t" style="transform:scaleX(0.874);left:959.5px;top:687.2px;font-size:18.3px;color:#000;font-weight:400;">49.00</span>
<div style="position:absolute;left:896.3px;top:717.0px;width:55.4px;height:20.0px;background:#04c89c;box-shadow:inset 1.6px 1.6px 0 #58ecc8,inset -1.4px -1.4px 0 #00b890;"></div>
<span class="t" style="transform:scaleX(0.984);left:897.5px;top:716.7px;font-size:18.3px;color:#002018;font-weight:400;">CH-27</span>
<div style="position:absolute;left:956.3px;top:714.2px;width:62.0px;height:25.6px;background:#fff;box-shadow:inset 1.4px 1.4px 0 #e0d8d8,inset -1.2px -1.2px 0 #ece8e8,inset 3px 3px 0 #c4bcbc;"></div>
<span class="t" style="transform:scaleX(0.857);left:959.5px;top:717.2px;font-size:18.3px;color:#000;font-weight:400;">0.00</span>
<div style="position:absolute;left:896.3px;top:747.8px;width:55.4px;height:20.0px;background:#04c89c;box-shadow:inset 1.6px 1.6px 0 #58ecc8,inset -1.4px -1.4px 0 #00b890;"></div>
<span class="t" style="transform:scaleX(0.984);left:897.5px;top:747.5px;font-size:18.3px;color:#002018;font-weight:400;">CH-28</span>
<div style="position:absolute;left:956.3px;top:745.0px;width:62.0px;height:25.6px;background:#fff;box-shadow:inset 1.4px 1.4px 0 #e0d8d8,inset -1.2px -1.2px 0 #ece8e8,inset 3px 3px 0 #c4bcbc;"></div>
<span class="t" style="transform:scaleX(0.857);left:959.5px;top:748.0px;font-size:18.3px;color:#000;font-weight:400;">0.00</span>
<div style="position:absolute;left:896.3px;top:777.0px;width:55.4px;height:20.0px;background:#04c89c;box-shadow:inset 1.6px 1.6px 0 #58ecc8,inset -1.4px -1.4px 0 #00b890;"></div>
<span class="t" style="transform:scaleX(0.984);left:897.5px;top:776.7px;font-size:18.3px;color:#002018;font-weight:400;">CH-29</span>
<div style="position:absolute;left:956.3px;top:774.2px;width:62.0px;height:25.6px;background:#fff;box-shadow:inset 1.4px 1.4px 0 #e0d8d8,inset -1.2px -1.2px 0 #ece8e8,inset 3px 3px 0 #c4bcbc;"></div>
<span class="t" style="transform:scaleX(0.857);left:959.5px;top:777.2px;font-size:18.3px;color:#000;font-weight:400;">0.00</span>
<div style="position:absolute;left:896.3px;top:807.0px;width:55.4px;height:20.0px;background:#04c89c;box-shadow:inset 1.6px 1.6px 0 #58ecc8,inset -1.4px -1.4px 0 #00b890;"></div>
<span class="t" style="transform:scaleX(0.984);left:897.5px;top:806.7px;font-size:18.3px;color:#002018;font-weight:400;">CH-30</span>
<div style="position:absolute;left:956.3px;top:804.2px;width:62.0px;height:25.6px;background:#fff;box-shadow:inset 1.4px 1.4px 0 #e0d8d8,inset -1.2px -1.2px 0 #ece8e8,inset 3px 3px 0 #c4bcbc;"></div>
<span class="t" style="transform:scaleX(0.857);left:959.5px;top:807.2px;font-size:18.3px;color:#000;font-weight:400;">0.00</span>
<div style="position:absolute;left:896.3px;top:836.1px;width:55.4px;height:20.0px;background:#04c89c;box-shadow:inset 1.6px 1.6px 0 #58ecc8,inset -1.4px -1.4px 0 #00b890;"></div>
<span class="t" style="transform:scaleX(0.984);left:897.5px;top:835.8px;font-size:18.3px;color:#002018;font-weight:400;">CH-31</span>
<div style="position:absolute;left:956.3px;top:833.3px;width:62.0px;height:25.6px;background:#fff;box-shadow:inset 1.4px 1.4px 0 #e0d8d8,inset -1.2px -1.2px 0 #ece8e8,inset 3px 3px 0 #c4bcbc;"></div>
<span class="t" style="transform:scaleX(0.857);left:959.5px;top:836.3px;font-size:18.3px;color:#000;font-weight:400;">0.00</span>
<div style="position:absolute;left:640.5px;top:881.0px;width:141.2px;height:18.8px;background:#04c89c;box-shadow:inset 1.6px 1.6px 0 #58ecc8,inset -1.4px -1.4px 0 #00b890;"></div>
<span class="t" style="letter-spacing:0.24px;left:641.7px;top:880.1px;font-size:18.3px;color:#002018;font-weight:400;">計測CH平均温度</span>
<div style="position:absolute;left:788.2px;top:877.5px;width:61.1px;height:26.4px;background:#fff;box-shadow:inset 1.4px 1.4px 0 #e0d8d8,inset -1.2px -1.2px 0 #ece8e8,inset 3px 3px 0 #c4bcbc;"></div>
<span class="t" style="transform:scaleX(0.874);left:791.4px;top:880.9px;font-size:18.3px;color:#000;font-weight:400;">29.00</span>
<div style="position:absolute;left:462.0px;top:912.5px;width:983.5px;height:24.7px;background:#fff;box-shadow:inset 1.6px 1.6px 0 #b8b0b0,inset -1.2px -1.2px 0 #e8e8e8;"></div>
<span class="t" style="transform:scaleX(1.005);left:467.8px;top:916.5px;font-size:16.5px;color:#000;font-weight:400;">PLOTTING IMAGE</span>
<div style="position:absolute;left:1052.4px;top:571.8px;width:91.4px;height:19.5px;background:#30dcb0;box-shadow:inset 1px 1px 0 #80f0d8,inset -1px -1px 0 #00b890;"></div>
<span class="t" style="letter-spacing:0.85px;left:1053.9px;top:572.6px;font-size:17.0px;color:#000;font-weight:400;">温度データ</span>
<div style="position:absolute;left:1051.8px;top:593.5px;width:408.5px;height:272.5px;background:transparent;box-sizing:border-box;border-style:solid;border-color:#58ecc8 #00b48c #00b48c #58ecc8;border-width:2.8px 2.6px 2.6px 2.8px;"></div>
<div style="position:absolute;left:1107.6px;top:606.3px;width:341.6px;height:225.5px;background:#fff;"></div>
<div style="position:absolute;left:1164.4px;top:606.3px;width:2.3px;height:224.5px;background:#282828;"></div>
<div style="position:absolute;left:1221.8px;top:606.3px;width:2.3px;height:224.5px;background:#282828;"></div>
<div style="position:absolute;left:1276.9px;top:606.3px;width:2.3px;height:224.5px;background:#282828;"></div>
<div style="position:absolute;left:1333.4px;top:606.3px;width:2.3px;height:224.5px;background:#282828;"></div>
<div style="position:absolute;left:1390.7px;top:606.3px;width:2.3px;height:224.5px;background:#282828;"></div>
<div style="position:absolute;left:1108.0px;top:652.3px;width:338.8px;height:2.1px;background:#000;"></div>
<div style="position:absolute;left:1108.0px;top:696.7px;width:338.8px;height:2.1px;background:#000;"></div>
<div style="position:absolute;left:1108.0px;top:739.1px;width:338.8px;height:2.1px;background:#000;"></div>
<div style="position:absolute;left:1108.0px;top:784.1px;width:338.8px;height:2.1px;background:#000;"></div>
<span class="t" style="transform:scaleX(0.876);left:1064.0px;top:597.9px;font-size:17.0px;color:#002818;font-weight:400;">50.0</span>
<div style="position:absolute;left:1097.5px;top:605.7px;width:8.0px;height:2.2px;background:#002418;"></div>
<span class="t" style="transform:scaleX(0.876);left:1064.0px;top:644.4px;font-size:17.0px;color:#002818;font-weight:400;">40.0</span>
<div style="position:absolute;left:1097.5px;top:652.2px;width:8.0px;height:2.2px;background:#002418;"></div>
<span class="t" style="transform:scaleX(0.876);left:1064.0px;top:688.8px;font-size:17.0px;color:#002818;font-weight:400;">30.0</span>
<div style="position:absolute;left:1097.5px;top:696.6px;width:8.0px;height:2.2px;background:#002418;"></div>
<span class="t" style="transform:scaleX(0.876);left:1064.0px;top:731.2px;font-size:17.0px;color:#002818;font-weight:400;">20.0</span>
<div style="position:absolute;left:1097.5px;top:739.0px;width:8.0px;height:2.2px;background:#002418;"></div>
<span class="t" style="transform:scaleX(0.876);left:1064.0px;top:776.2px;font-size:17.0px;color:#002818;font-weight:400;">10.0</span>
<div style="position:absolute;left:1097.5px;top:784.0px;width:8.0px;height:2.2px;background:#002418;"></div>
<span class="t" style="transform:scaleX(0.888);left:1072.0px;top:821.1px;font-size:17.0px;color:#002818;font-weight:400;">0.0</span>
<div style="position:absolute;left:1097.5px;top:828.9px;width:8.0px;height:2.2px;background:#002418;"></div>
<svg style="left:1100px;top:700px" width="70" height="50" viewBox="0 0 70 50"><polyline points="8.8,40.8 14,38.6 23,31 33,23.4 40,18 48,12.5 57.2,5.1" fill="none" stroke="#f01818" stroke-width="1.7"/></svg>
<span class="t" style="transform:scaleX(0.925);left:1110.7px;top:840.7px;font-size:16.5px;color:#003828;font-weight:400;">0</span>
<span class="t" style="transform:scaleX(0.926);left:1424.4px;top:840.7px;font-size:16.5px;color:#003828;font-weight:400;">59</span>
<span class="t" style="transform:scaleX(0.862);left:1470.9px;top:840.9px;font-size:16.5px;color:#003828;font-weight:400;">S</span>
<div style="position:absolute;left:1050.7px;top:880.0px;width:106.9px;height:21.0px;background:#14d6a8;box-shadow:inset 1.2px 1.2px 0 #50e8c8,inset -1.2px -1.2px 0 #00c498;"></div>
<span class="t" style="letter-spacing:-0.02px;left:1051.9px;top:880.2px;font-size:18.3px;color:#002018;font-weight:400;">設定温度(℃)</span>
<div style="position:absolute;left:1163.4px;top:878.0px;width:13.5px;height:26.0px;background:#dcdcdc;"></div>
<svg style="left:1164.1px;top:879.0px" width="12" height="24" viewBox="0 0 12 24"><polygon points="6,1 11.5,8.5 0.5,8.5" fill="#000"/><polygon points="6,23 11.5,15.5 0.5,15.5" fill="#000"/><rect x="1" y="10.3" width="10" height="1.2" fill="#fff" opacity="0.75"/><rect x="1" y="12.6" width="10" height="1.2" fill="#fff" opacity="0.75"/></svg>
<div style="position:absolute;left:1176.7px;top:877.4px;width:46.8px;height:26.6px;background:#fff;box-shadow:inset 1.4px 1.4px 0 #e0d8d8,inset -1.2px -1.2px 0 #ece8e8,inset 3px 3px 0 #c4bcbc;"></div>
<span class="t" style="transform:scaleX(0.866);left:1180.0px;top:881.1px;font-size:18.0px;color:#000;font-weight:400;">30.00</span>
<div style="position:absolute;left:1231.7px;top:880.0px;width:149.5px;height:21.0px;background:#14d6a8;box-shadow:inset 1.2px 1.2px 0 #50e8c8,inset -1.2px -1.2px 0 #00c498;"></div>
<span class="t" style="letter-spacing:-0.02px;left:1232.9px;top:880.2px;font-size:18.3px;color:#002018;font-weight:400;">設定温度到達時間</span>
<div style="position:absolute;left:1384.5px;top:877.4px;width:85.4px;height:26.6px;background:#fff;box-shadow:inset 1.4px 1.4px 0 #e0d8d8,inset -1.2px -1.2px 0 #ece8e8,inset 3px 3px 0 #c4bcbc;"></div>
<span class="t" style="transform:scaleX(0.859);left:1388.5px;top:881.1px;font-size:18.0px;color:#000;font-weight:400;">0</span>
</div></body></html>
